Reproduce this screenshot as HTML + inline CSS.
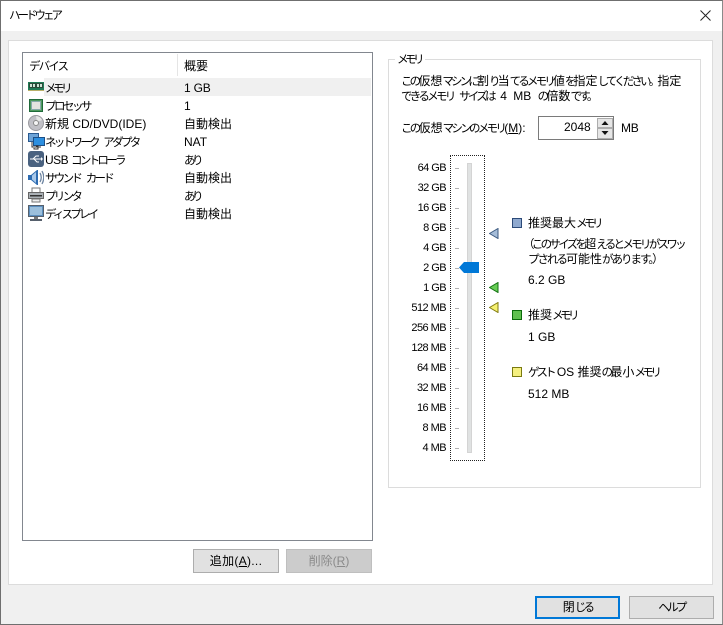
<!DOCTYPE html>
<html lang="ja"><head><meta charset="utf-8"><title>ハードウェア</title>
<style>
html,body{margin:0;padding:0}
body{width:723px;height:625px;overflow:hidden;position:relative;background:#f0f0f0;font:12px/16px "Liberation Sans","Noto Sans CJK JP",sans-serif;color:#000}
.a{position:absolute;white-space:nowrap}
.box{position:absolute;box-sizing:border-box}
.btn{position:absolute;box-sizing:border-box;background:#e1e1e1;border:1px solid #adadad;text-align:center;line-height:21px;white-space:nowrap}
.l{position:absolute;left:400px;width:46px;text-align:right;white-space:nowrap;height:16px;font-size:11px;letter-spacing:-.55px}
.t{position:absolute;left:455px;width:4px;height:1px;background:#b0b0b0}
.i{position:absolute;left:28px}
u{text-decoration:underline}
b{font-weight:normal;font-size:11.500px;letter-spacing:-2.700px;word-spacing:5px}
b.m{letter-spacing:-3.500px}
</style></head><body>
<div class="box" style="left:0;top:0;width:723px;height:625px;border:1px solid #6f6f6f;border-right:1px solid #8a8a8a"></div>
<div class="box" style="left:1px;top:1px;width:721px;height:30px;background:#fff"></div>
<div class="a" style="left:9px;top:7px"><b style="letter-spacing:-3px">ハードウェア</b></div>
<svg class="a" style="left:700px;top:10px" width="11" height="11"><path d="M.5.5l10 10M10.500.5l-10 10" stroke="#222" fill="none"/></svg>

<div class="box" style="left:8px;top:40px;width:705px;height:545px;background:#fff;border:1px solid #dcdcdc"></div>

<div class="box" style="left:22px;top:52px;width:351px;height:489px;background:#fff;border:1px solid #82878f"></div>
<div class="box" style="left:177px;top:54px;width:1px;height:22px;background:#e5e5e5"></div>
<div class="box" style="left:44px;top:78px;width:327px;height:18px;background:#f0f0f0"></div>
<div class="a" style="left:29px;top:58px"><b style="letter-spacing:-1.900px">デバイス</b></div>
<div class="a" style="left:184px;top:58px">概要</div>

<svg class="i" style="top:81px" width="16" height="12"><rect y="1" width="16" height="8" fill="#1f7a55"/><rect x="1" y="2" width="14" height="5" fill="#2a4a3a"/><path d="M2 3h2v3H2zM5 3h2v3H5zM9 3h2v3H9zM12 3h2v3h-2z" fill="#cfe3d5"/><path d="M0 9h16v1H0z" fill="#b9b06a"/></svg>
<svg class="i" style="top:99px;left:29px" width="14" height="13"><rect x=".5" y=".5" width="13" height="12" fill="#4e9a5e" stroke="#1f6a3a"/><rect x="2.500" y="2.500" width="9" height="8" fill="#e4e4e0" stroke="#8aa"/></svg>
<svg class="i" style="top:115px" width="16" height="16"><circle cx="8" cy="8" r="7.500" fill="#c0c0c6" stroke="#9a9aa0"/><path d="M8 1a7 7 0 0 1 6 4L9 7z" fill="#e6e6e6"/><circle cx="8" cy="8" r="2.500" fill="#f5f5f5" stroke="#888"/></svg>
<svg class="i" style="top:133px" width="17" height="17"><rect x=".5" y=".5" width="10" height="8" fill="#6ea4d8" stroke="#2a5a90"/><rect x="5.500" y="4.500" width="11" height="8" fill="#2c8fe0" stroke="#1d4f86"/><path d="M4 9v5h9M8 13h2v3H6v-1" fill="none" stroke="#333"/></svg>
<svg class="i" style="top:151px" width="16" height="16"><rect width="16" height="16" rx="3" fill="#4a6280"/><path d="M2 8h11M5 8l3-3h3M6 8l3 3h2" stroke="#fff" fill="none"/><path d="M13 6l2 2-2 2z" fill="#fff"/></svg>
<svg class="i" style="top:169px" width="16" height="17"><path d="M0 6h3l6-5h1v15H9L3 11H0z" fill="#2d6bb0"/><path d="M4 6.500L8 3v11l-4-3.500z" fill="#a8c8ea"/><path d="M12 4q2.500 4.500 0 9M14 2q3.500 6.500 0 13" fill="none" stroke="#6f86a2" stroke-width="1.300"/></svg>
<svg class="i" style="top:187px" width="16" height="16"><rect x="4" y="1" width="8" height="5" fill="#fff" stroke="#777"/><rect x=".5" y="5.500" width="15" height="6" fill="#aab0b5" stroke="#666"/><rect x="2" y="8" width="12" height="1.500" fill="#333"/><rect x="4" y="12" width="8" height="3" fill="#eee" stroke="#777"/></svg>
<svg class="i" style="top:205px" width="16" height="16"><rect x=".5" y=".5" width="15" height="11" fill="#5c8fbf" stroke="#56606c"/><rect x="2" y="2" width="12" height="8" fill="#9cc0dd"/><rect x="6" y="12" width="4" height="2" fill="#777"/><rect x="2" y="14" width="12" height="2" fill="#56606c"/></svg>

<div class="a" style="left:45px;top:80px"><b class="m">メモリ</b></div><div class="a" style="left:184px;top:80px;letter-spacing:-.2px">1 GB</div>
<div class="a" style="left:45px;top:98px"><b style="letter-spacing:-2.500px">プロセッサ</b></div><div class="a" style="left:184px;top:98px">1</div>
<div class="a" style="left:45px;top:116px">新規 CD/DVD(IDE)</div><div class="a" style="left:184px;top:116px">自動検出</div>
<div class="a" style="left:45px;top:134px"><b>ネットワーク アダプタ</b></div><div class="a" style="left:184px;top:134px">NAT</div>
<div class="a" style="left:45px;top:152px;letter-spacing:-.5px">USB <b>コントローラ</b></div><div class="a" style="left:184px;top:152px"><b class="m">あり</b></div>
<div class="a" style="left:45px;top:170px"><b>サウンド カード</b></div><div class="a" style="left:184px;top:170px">自動検出</div>
<div class="a" style="left:45px;top:188px"><b>プリンタ</b></div><div class="a" style="left:184px;top:188px"><b class="m">あり</b></div>
<div class="a" style="left:45px;top:206px"><b style="letter-spacing:-2.800px">ディスプレイ</b></div><div class="a" style="left:184px;top:206px">自動検出</div>

<div class="btn" style="left:193px;top:549px;width:86px;height:24px;line-height:23px;letter-spacing:.3px">追加(<u>A</u>)...</div>
<div class="btn" style="left:286px;top:549px;width:86px;height:24px;line-height:23px;background:#cccccc;border-color:#bfbfbf;color:#8a8a8a">削除(<u>R</u>)</div>

<div class="box" style="left:388px;top:59px;width:313px;height:429px;border:1px solid #dcdcdc"></div>
<div class="a" style="left:395px;top:51px;background:#fff;padding:0 4px 0 2px"><b class="m">メモリ</b></div>
<div class="a" style="left:401px;top:73px"><b style="letter-spacing:-2.850px">この</b>仮想<b style="letter-spacing:-2.850px">マシンに</b>割<b style="letter-spacing:-2.850px">り</b>当<b style="letter-spacing:-2.850px">てるメモリ</b>値<b style="letter-spacing:-2.850px">を</b>指定<b style="letter-spacing:-2.850px">してください。</b>指定</div>
<div class="a" style="left:401px;top:88px;word-spacing:3px"><b>できるメモリ サイズは</b> 4 MB <b>の</b>倍数<b>です。</b></div>
<div class="a" style="left:401px;top:120px"><b>この</b>仮想<b>マシンのメモリ</b>(<u>M</u>):</div>

<div class="box" style="left:538px;top:116px;width:76px;height:24px;background:#fff;border:1px solid #7a7a7a"></div>
<div class="a" style="left:564px;top:119px">2048</div>
<div class="box" style="left:597px;top:118px;width:16px;height:10px;background:#e6e6e6;border:1px solid #adadad"></div>
<div class="box" style="left:597px;top:128px;width:16px;height:11px;background:#e6e6e6;border:1px solid #adadad"></div>
<svg class="a" style="left:601px;top:121px" width="8" height="15"><path d="M4 0l3.500 4H.5zM.5 10h7L4 14z" fill="#111"/></svg>
<div class="a" style="left:621px;top:120px;letter-spacing:-.3px">MB</div>

<div class="box" style="left:450px;top:155px;width:35px;height:306px;border:1px dotted #222"></div>
<div class="box" style="left:467px;top:163px;width:5px;height:290px;background:#e0e2e2;border:1px solid #d4d4d4"></div>

<div class="l" style="top:160px">64 GB</div><div class="t" style="top:168px"></div>
<div class="l" style="top:180px">32 GB</div><div class="t" style="top:188px"></div>
<div class="l" style="top:200px">16 GB</div><div class="t" style="top:208px"></div>
<div class="l" style="top:220px">8 GB</div><div class="t" style="top:228px"></div>
<div class="l" style="top:240px">4 GB</div><div class="t" style="top:248px"></div>
<div class="l" style="top:260px">2 GB</div><div class="t" style="top:268px"></div>
<div class="l" style="top:280px">1 GB</div><div class="t" style="top:288px"></div>
<div class="l" style="top:300px">512 MB</div><div class="t" style="top:308px"></div>
<div class="l" style="top:320px">256 MB</div><div class="t" style="top:328px"></div>
<div class="l" style="top:340px">128 MB</div><div class="t" style="top:348px"></div>
<div class="l" style="top:360px">64 MB</div><div class="t" style="top:368px"></div>
<div class="l" style="top:380px">32 MB</div><div class="t" style="top:388px"></div>
<div class="l" style="top:400px">16 MB</div><div class="t" style="top:408px"></div>
<div class="l" style="top:420px">8 MB</div><div class="t" style="top:428px"></div>
<div class="l" style="top:440px">4 MB</div><div class="t" style="top:448px"></div>

<svg class="a" style="left:459px;top:262px" width="20" height="12"><path d="M0 5.500L5 0h15v11H5z" fill="#0078d7"/></svg>
<svg class="a" style="left:489px;top:228px" width="10" height="11"><path d="M.5 5.500L9 .5v10z" fill="#a5bcd8" stroke="#3c5a80"/></svg>
<svg class="a" style="left:489px;top:282px" width="10" height="11"><path d="M.5 5.500L9 .5v10z" fill="#66cc55" stroke="#107010"/></svg>
<svg class="a" style="left:489px;top:302px" width="10" height="11"><path d="M.5 5.500L9 .5v10z" fill="#f5f070" stroke="#807a10"/></svg>

<div class="box" style="left:512px;top:218px;width:10px;height:10px;background:#8fa9cf;border:1px solid #2c4a78"></div>
<div class="a" style="left:528px;top:215px">推奨最大<b class="m">メモリ</b></div>
<div class="a" style="left:528px;top:236px"><b style="margin-left:-5px">（このサイズを</b>超<b>えるとメモリがスワッ</b></div>
<div class="a" style="left:528px;top:251px"><b style="letter-spacing:-2px">プされる</b>可能性<b style="letter-spacing:-2px">があります。）</b></div>
<div class="a" style="left:528px;top:272px">6.2 GB</div>
<div class="box" style="left:512px;top:310px;width:10px;height:10px;background:#5fc04f;border:1px solid #0a6a0a"></div>
<div class="a" style="left:528px;top:307px">推奨<b class="m">メモリ</b></div>
<div class="a" style="left:528px;top:329px">1 GB</div>
<div class="box" style="left:512px;top:367px;width:10px;height:10px;background:#f5f080;border:1px solid #7a7a10"></div>
<div class="a" style="left:528px;top:364px"><b style="letter-spacing:-3px">ゲスト</b> OS 推奨<b>の</b>最小<b class="m">メモリ</b></div>
<div class="a" style="left:528px;top:386px">512 MB</div>

<div class="btn" style="left:535px;top:596px;width:85px;height:23px;border:2px solid #0078d7;line-height:19px">閉<b>じる</b></div>
<div class="btn" style="left:629px;top:596px;width:85px;height:23px;line-height:21px"><b>ヘルプ</b></div>
</body></html>
